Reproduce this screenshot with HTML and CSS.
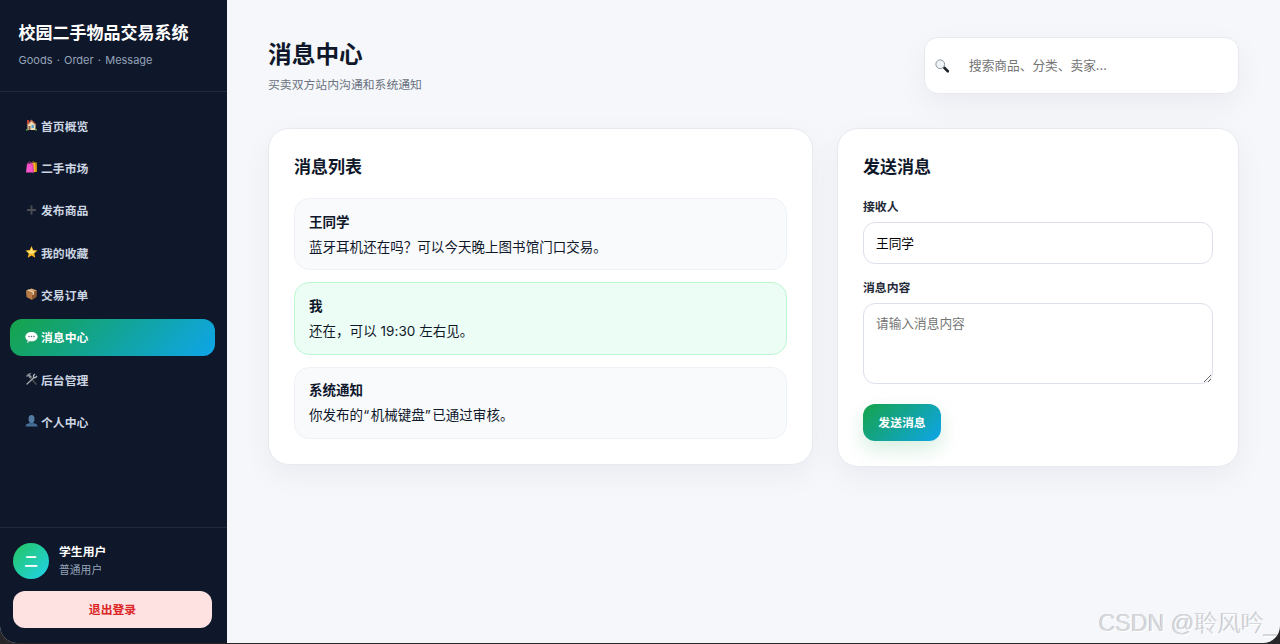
FILE: index.html
```html
<!DOCTYPE html>
<html lang="zh-CN">
<head>
  <meta charset="UTF-8">
  <title>校园二手物品交易系统</title>
  <link rel="stylesheet" href="styles.css">
</head>
<body>
  <div class="app">
    <aside class="sidebar">
      <div class="brand">
        <h2>校园二手物品交易系统</h2>
        <p>Goods · Order · Message</p>
      </div>
      <nav class="nav">
        <a class="nav-item">
          <svg class="icon" viewBox="0 0 24 24"><path fill="#c43c2d" d="M3 2h4v8H3z"/><path fill="#f1dfb6" d="M4 11l8-8 8 8v11H4z"/><path fill="#bd6a50" d="M12 1l10 10-2 2-8-8-8 8-2-2z"/><path fill="#8a6650" d="M6 14h4v8H6z"/><path fill="#58a7d6" d="M12 12h5v6h-5z"/><path fill="#6c9b43" d="M1 20h4v3H1zM19 20h4v3h-4z"/></svg>
          <span>首页概览</span>
        </a>
        <a class="nav-item">
          <svg class="icon" viewBox="0 0 24 24"><path fill="none" stroke="#c98812" stroke-width="1.5" d="M12 6c0-6 7-6 7 0"/><path fill="#f0b91c" d="M11 4l11-1 1 18-8 2z"/><path fill="#c98712" d="M19 4l3-1 1 18-3 1z"/><path fill="#f555c8" d="M3 5h12l2 18H1z"/><path fill="#cf329d" d="M13.500 5H15l2 18h-2z"/><path fill="none" stroke="#c93ba0" stroke-width="1.5" d="M5 9c0-10 7-10 7 0"/></svg>
          <span>二手市场</span>
        </a>
        <a class="nav-item">
          <svg class="icon" viewBox="0 0 24 24"><path fill="#4b4d50" d="M10 3h4v7h7v4h-7v7h-4v-7H3v-4h7z"/></svg>
          <span>发布商品</span>
        </a>
        <a class="nav-item">
          <svg class="icon" viewBox="0 0 24 24"><path fill="#f9b91f" d="M12 0l3.5 8.2 8.5.8-6.5 5.8 2 8.7L12 19l-7.5 4.500 2-8.700L0 9l8.500-.8z"/><path fill="#ffe67a" d="M12 3l2.5 7 6 .5-5 4-3.500 1-6-1.500L3 10.500l6.500-.5z"/></svg>
          <span>我的收藏</span>
        </a>
        <a class="nav-item">
          <svg class="icon" viewBox="0 0 24 24"><path fill="#d7a672" d="M1 5l11-4 11 4-10 5z"/><path fill="#b97c48" d="M1 5l12 5v14L2 18z"/><path fill="#8e5932" d="M23 5l-10 5v14l9-6z"/><path fill="#ecd3aa" d="M6 3l11 5v5l-3 1V9L4 4z"/></svg>
          <span>交易订单</span>
        </a>
        <a class="nav-item active">
          <svg class="icon" viewBox="0 0 24 24"><path fill="#c8d5d2" d="M12 3c7 0 12 4 12 9s-5 9-12 9l-3-.3C7 23 5 24 2 23c2-1 2-3 2-4-3-2-4-4-4-7 0-5 5-9 12-9z"/><ellipse cx="12" cy="11" rx="12" ry="9" fill="#fff"/><g fill="#5c6669"><circle cx="7" cy="11" r="1.500"/><circle cx="12" cy="11" r="1.500"/><circle cx="17" cy="11" r="1.500"/></g></svg>
          <span>消息中心</span>
        </a>
        <a class="nav-item">
          <svg class="icon" viewBox="0 0 24 24"><path fill="none" stroke="#45484c" stroke-width="3.500" stroke-linecap="round" d="M10 9l11 13"/><path fill="none" stroke="#a3a9ae" stroke-width="2.500" stroke-linecap="round" d="M3 22L17 9"/><path fill="none" stroke="#b3b8bb" stroke-width="2.500" d="M19 2l-3 3v4h4l3-3"/><path fill="#8b9196" d="M1 6l5-5 6-1-3 3 4 5-4 3-4-5-2 2z"/></svg>
          <span>后台管理</span>
        </a>
        <a class="nav-item">
          <svg class="icon" viewBox="0 0 24 24"><path fill="#476f96" d="M0 23c0-5 4-6 9-7h6c5 1 9 2 9 7z"/><path fill="#3b6188" d="M9 13h6v5l-3 2-3-2z"/><ellipse cx="12" cy="8" rx="6" ry="8" fill="#527ca3"/></svg>
          <span>个人中心</span>
        </a>
      </nav>
      <div class="sidebar-footer">
        <div class="user">
          <div class="avatar">二</div>
          <div>
            <div class="user-name">学生用户</div>
            <div class="user-role">普通用户</div>
          </div>
        </div>
        <button class="logout">退出登录</button>
      </div>
    </aside>

    <main class="main">
      <header class="topbar">
        <div>
          <h1>消息中心</h1>
          <p>买卖双方站内沟通和系统通知</p>
        </div>
        <div class="search">
          <svg class="search-icon" viewBox="0 0 24 24"><path stroke="#20272c" stroke-width="4.500" stroke-linecap="round" d="M16 15l6 6"/><circle cx="9" cy="9" r="7.500" fill="#edf3f6" stroke="#8b969d" stroke-width="1.700"/></svg>
          <input type="text" placeholder="搜索商品、分类、卖家...">
        </div>
      </header>

      <div class="grid">
        <section class="card">
          <h3>消息列表</h3>
          <div class="message-list">
            <div class="message">
              <b>王同学</b>
              <p>蓝牙耳机还在吗？可以今天晚上图书馆门口交易。</p>
            </div>
            <div class="message mine">
              <b>我</b>
              <p>还在，可以 19:30 左右见。</p>
            </div>
            <div class="message">
              <b>系统通知</b>
              <p>你发布的<span class="quote">“</span>机械键盘<span class="quote">”</span>已通过审核。</p>
            </div>
          </div>
        </section>

        <section class="card">
          <h3>发送消息</h3>
          <form class="form">
            <label for="receiver">接收人</label>
            <input id="receiver" type="text" value="王同学">
            <label for="content">消息内容</label>
            <textarea id="content" placeholder="请输入消息内容"></textarea>
            <button type="button" class="btn">发送消息</button>
          </form>
        </section>
      </div>
    </main>
    <div class="watermark">CSDN @聆风吟_</div>
  </div>
</body>
</html>
```
FILE: styles.css
```css
:root {
  --dark: #0f172a;
  --text: #0f172a;
  --muted: #6b7280;
  --line: #e8eaf0;
  --gradient: linear-gradient(135deg, #16a34a, #0ea5e9);
  --shadow: 0 10px 30px rgba(15, 23, 42, 0.05);
}

* {
  box-sizing: border-box;
}

body {
  margin: 0;
  background: #292629;
  color: var(--text);
  font-family: Inter, "Noto Sans CJK SC", sans-serif;
  font-size: 13.5px;
  overflow: hidden;
}

h1,
h2,
h3,
p {
  margin: 0;
}

input,
textarea,
button {
  font-family: inherit;
}

.app {
  position: relative;
  display: flex;
  height: 643px;
  border-radius: 0 0 17px 17px;
  overflow: hidden;
  background: #f5f7fb;
}

/* sidebar */
.sidebar {
  display: flex;
  flex-direction: column;
  flex: 0 0 227px;
  background: var(--dark);
}

.brand {
  height: 92px;
  padding: 21px 18.5px 0;
  border-bottom: 1px solid rgba(255, 255, 255, 0.08);
}

.brand h2 {
  color: #fff;
  font-size: 17px;
  line-height: 25px;
}

.brand p {
  margin-top: 6px;
  color: #94a3b8;
  font-size: 11px;
  line-height: 17px;
  word-spacing: 1.1px;
}

.nav {
  display: flex;
  flex-direction: column;
  flex: 1;
  gap: 5.35px;
  padding: 15.5px 12px 0 10px;
}

.nav-item {
  display: flex;
  align-items: center;
  gap: 4px;
  height: 37px;
  padding: 0 15px 2px;
  border-radius: 12px;
  color: #cbd5e1;
  font-size: 11.85px;
  font-weight: 700;
}

.nav-item.active {
  background: var(--gradient);
  color: #fff;
}

.icon {
  width: 13px;
  height: 12px;
  margin-right: -1px;
}

.sidebar-footer {
  height: 116px;
  padding: 15px 15px 0 13px;
  border-top: 1px solid rgba(255, 255, 255, 0.08);
}

.user {
  display: flex;
  align-items: center;
  gap: 10px;
  height: 36px;
  margin-bottom: 12px;
}

.avatar {
  display: flex;
  align-items: center;
  justify-content: center;
  width: 36px;
  height: 36px;
  padding-bottom: 2px;
  border-radius: 50%;
  background: linear-gradient(135deg, #22c55e, #22d3ee);
  color: #fff;
  font-weight: 700;
}

.user-name {
  color: #fff;
  font-size: 11.85px;
  font-weight: 700;
  line-height: 18px;
}

.user-role {
  margin-top: 1px;
  color: #94a3b8;
  font-size: 10.8px;
  line-height: 18px;
}

.logout {
  width: 100%;
  height: 37px;
  padding: 0 0 2px;
  border: 0;
  border-radius: 12px;
  background: #fee2e2;
  color: #dc2626;
  font-size: 11.85px;
  font-weight: 700;
}

/* content */
.main {
  flex: 1;
  padding: 37px 41px 0;
}

.topbar {
  display: flex;
  justify-content: space-between;
  height: 91px;
}

.topbar h1 {
  font-size: 23.7px;
  line-height: 36px;
}

.topbar p {
  margin-top: 3px;
  color: var(--muted);
  font-size: 11.85px;
  line-height: 18px;
}

.search {
  display: flex;
  align-items: center;
  width: 315px;
  height: 57px;
  padding: 0 10px;
  border: 1px solid var(--line);
  border-radius: 14px;
  background: #fff;
  box-shadow: var(--shadow);
}

.search-icon {
  width: 14px;
  height: 14px;
}

.search input {
  flex: 1;
  padding: 0 20px;
  border: 0;
  outline: 0;
  font-size: 12.7px;
}

.grid {
  display: grid;
  grid-template-columns: 545px 402px;
  gap: 24px;
  align-items: start;
}

.card {
  padding: 25px 25px 25px;
  border: 1px solid var(--line);
  border-radius: 21px;
  background: #fff;
  box-shadow: var(--shadow);
}

.card h3 {
  margin-bottom: 18px;
  font-size: 17px;
  line-height: 26px;
}

.message-list {
  display: grid;
  gap: 12px;
}

.message {
  height: 72.3px;
  padding: 10.5px 14px;
  border: 1px solid #eef2f7;
  border-radius: 15px;
  background: #f8fafc;
  line-height: 25px;
}

.message b {
  display: block;
}

.message p {
  letter-spacing: 0.04px;
}

.quote {
  letter-spacing: 1.5px;
}

.mine {
  border-color: #bbf7d0;
  background: #ecfdf5;
}

.form label {
  display: block;
  color: #1f2937;
  font-size: 11.85px;
  font-weight: 700;
  line-height: 18px;
}

.form input,
.form textarea {
  display: block;
  width: 100%;
  margin: 6px 0 15px;
  padding: 11px 12px;
  border: 1px solid #dbe0ea;
  border-radius: 12px;
  color: #000;
  font-size: 12.7px;
  line-height: 18px;
}

.form input {
  height: 42px;
  padding: 10px 12px 12px;
}

.form textarea {
  height: 81px;
  margin-bottom: 20px;
  resize: vertical;
}

.form input::placeholder,
.form textarea::placeholder {
  color: #757575;
}

.btn {
  display: block;
  width: 78px;
  height: 37px;
  padding: 0 0 2px;
  border: 0;
  border-radius: 12px;
  background: var(--gradient);
  color: #fff;
  font-size: 11.85px;
  font-weight: 700;
  box-shadow: 0 8px 20px rgba(22, 163, 74, 0.18);
}

.watermark {
  position: absolute;
  right: 3px;
  bottom: 3px;
  color: #d6d8dc;
  font-family: "Liberation Sans", "Noto Sans CJK SC", sans-serif;
  font-size: 23.2px;
  font-weight: 300;
  line-height: 34px;
  text-shadow: 1px 1px 0 #fff, -0.5px -0.5px 0 #b4b6ba;
}
```
